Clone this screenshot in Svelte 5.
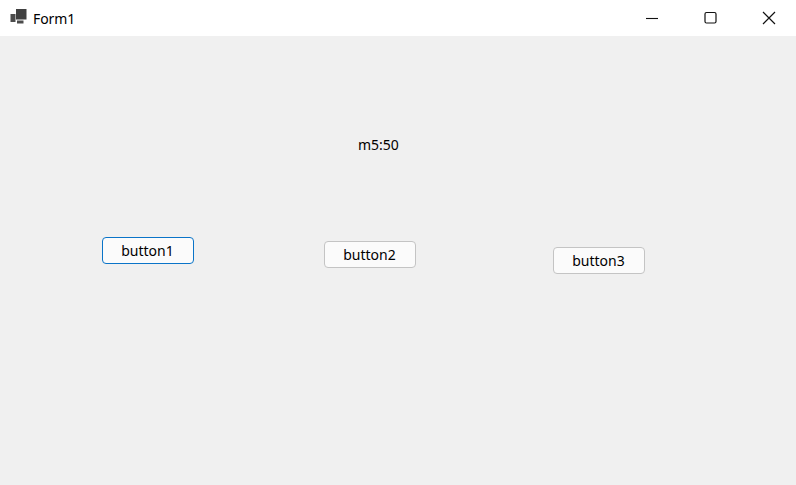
<script>
  const buttons = [
    { label: 'button1', left: 102, top: 201, focused: true },
    { label: 'button2', left: 324, top: 205 },
    { label: 'button3', left: 553, top: 211 }
  ];
</script>

<div class="window">
  <header class="titlebar">
    <svg class="app-icon" width="17" height="16" viewBox="0 0 17 16" aria-hidden="true">
      <rect x="0.5" y="5" width="5" height="8" fill="#4c4c4c" />
      <rect x="6" y="0" width="10.5" height="10.5" fill="#404040" />
      <rect x="7" y="11.5" width="6.5" height="3" fill="#4c4c4c" />
    </svg>
    <span class="title">Form1</span>
    <div class="controls">
      <div class="ctl">
        <svg width="14" height="14" viewBox="0 0 14 14" aria-hidden="true"><path d="M1 7.5H13" stroke="#111" stroke-width="1.1" fill="none" /></svg>
      </div>
      <div class="ctl">
        <svg width="14" height="14" viewBox="0 0 14 14" aria-hidden="true"><rect x="1" y="1.5" width="11" height="10.5" rx="1.5" stroke="#111" stroke-width="1.2" fill="none" /></svg>
      </div>
      <div class="ctl">
        <svg width="14" height="14" viewBox="0 0 14 14" aria-hidden="true"><path d="M1 1L13 13M13 1L1 13" stroke="#111" stroke-width="1.2" fill="none" /></svg>
      </div>
    </div>
  </header>
  <main class="client">
    <span class="label">m5:50</span>
    {#each buttons as b}
      <button class="btn" class:focused={b.focused} style="left:{b.left}px;top:{b.top}px">{b.label}</button>
    {/each}
  </main>
</div>

<style>
  :global(body) { margin: 0; background: #f0f0f0; }
  .window {
    width: 796px;
    height: 485px;
    display: flex;
    flex-direction: column;
    overflow: hidden;
    font-family: "Noto Sans", "Open Sans", sans-serif;
    font-size: 14px;
    color: #000;
  }
  .titlebar {
    height: 36px;
    flex: none;
    background: #fff;
    display: flex;
    align-items: center;
    padding-left: 10px;
  }
  .app-icon { flex: none; margin-top: -2px; }
  .title { margin-left: 6px; letter-spacing: -0.1px; }
  .controls { margin-left: auto; display: flex; gap: 4.5px; height: 100%; }
  .ctl {
    width: 54px;
    display: flex;
    align-items: center;
    justify-content: center;
  }
  .client { flex: 1; position: relative; background: #f0f0f0; }
  .label { position: absolute; left: 358px; top: 99px; line-height: 20px; }
  .btn {
    position: absolute;
    box-sizing: border-box;
    width: 92px;
    height: 27px;
    padding: 0 1px 0 0;
    background: #fbfbfb;
    border: 1px solid #c4c4c4;
    border-radius: 4px;
    font: inherit;
    color: #000;
  }
  .btn.focused { border-color: #0a74c8; }
</style>
